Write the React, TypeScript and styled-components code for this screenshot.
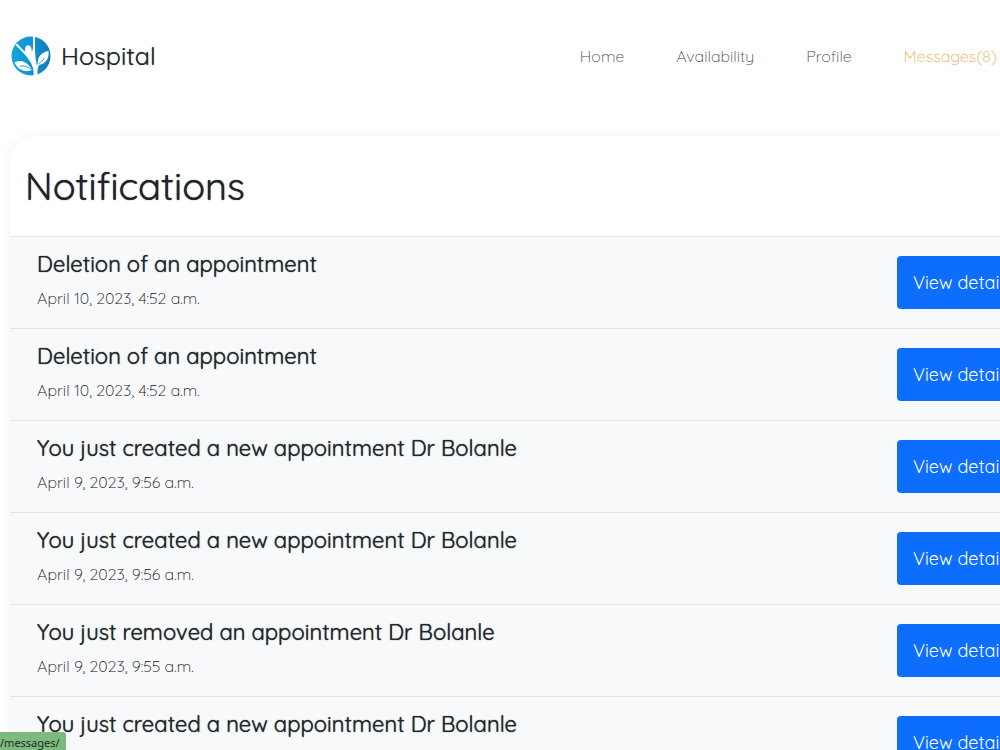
import React from "react";
import styled, { createGlobalStyle } from "styled-components";

const GlobalStyle = createGlobalStyle`
  *, *::before, *::after { box-sizing: border-box; }
  body {
    margin: 0;
    background: #ffffff;
    color: #212529;
    font-family: Quicksand, Lato, "Liberation Sans", sans-serif;
    font-size: 16px;
    line-height: 24px;
  }
`;

const Page = styled.div`
  height: 100vh;
  overflow: hidden;
`;

const Header = styled.header`
  display: flex;
  align-items: center;
  justify-content: space-between;
  padding: 32px 3px 32px 11px;
`;

const Brand = styled.a`
  display: flex;
  align-items: center;
  gap: 10px;
  color: #212529;
  font-size: 25px;
  font-weight: 400;
  line-height: 48px;
  text-decoration: none;
  text-shadow: 0 0 1px rgba(33, 37, 41, 0.6);
`;

const Nav = styled.nav`
  display: flex;
  gap: 52px;
`;

const NavLink = styled.a<{ $active?: boolean }>`
  color: ${(p) => (p.$active ? "#e8ad58" : "#44484d")};
  font-size: 16px;
  font-weight: 300;
  text-decoration: none;
`;

const Card = styled.main`
  margin: 24px -32px 0 10px;
  border-radius: 24px 24px 0 0;
  background: #ffffff;
  box-shadow: 0 0 12px rgba(0, 0, 0, 0.05);
`;

const CardTitle = styled.h1`
  margin: 0;
  padding: 26px 15px;
  font-size: 38px;
  font-weight: 400;
  line-height: 48px;
  text-shadow: 0 0 1px #212529;
`;

const List = styled.ul`
  margin: 0;
  padding: 0;
  list-style: none;
`;

const Item = styled.li`
  display: flex;
  align-items: flex-start;
  justify-content: space-between;
  height: 92px;
  padding: 13px 0 0 27px;
  border-top: 1px solid #e3e6e9;
  background: #f8f9fb;
`;

const ItemTitle = styled.h2`
  margin: 0 0 8px;
  font-size: 22px;
  font-weight: 400;
  line-height: 28px;
  text-shadow: 0 0 1px #212529;
`;

const ItemDate = styled.time`
  display: block;
  color: #0c0e10;
  font-size: 16px;
  font-weight: 300;
`;

const DetailsButton = styled.button`
  width: 135px;
  height: 53px;
  margin-top: 6px;
  padding: 0 16px;
  border: 0;
  border-radius: 4px;
  background: #0d6efd;
  color: #ffffff;
  font: inherit;
  font-size: 18px;
  text-align: left;
  white-space: nowrap;
`;

const StatusBar = styled.div`
  position: fixed;
  bottom: 0;
  left: 0;
  height: 18px;
  padding: 2px 6px 0 0;
  border-radius: 0 3px 0 0;
  background: #7dba80;
  color: #1c2b1e;
  font-family: "Noto Sans", "Open Sans", sans-serif;
  font-size: 11px;
  line-height: 18px;
`;

const Logo = () => (
  <svg width="40" height="40" viewBox="0 0 40 40" aria-hidden="true">
    <defs>
      <linearGradient id="disc" x1="0" x2="1">
        <stop offset="0" stopColor="#10a6e0" />
        <stop offset="0.55" stopColor="#1291cf" />
        <stop offset="1" stopColor="#1479b8" />
      </linearGradient>
    </defs>
    <circle cx="20" cy="20" r="19.5" fill="url(#disc)" />
    <g fill="#ffffff">
      <path d="M22 0 H24.2 C23.6 10 24.2 16 24.5 22 C25.5 28 27 34 26.4 40 H22.6 C23.2 31 20 26 15 20 C12 16.5 7.5 12 4.5 9 L6 7.6 C9 11 12 14 14.5 15.8 C13.6 12.5 14.5 9.3 17 9.2 C19.6 9.3 21 12 20.6 15.5 C21.6 15 22 13 22 10 Z" />
      <path d="M3.5 26.5 C8 23.4 16 24.5 21 34 C14 36.5 7 34.5 3.5 26.5Z" />
      <path d="M37.5 15 C38.5 22 35 28 27 29 C25.5 21 31 16 37.5 15Z" />
      <path d="M26 36 C26.5 31 28.5 28 31 25 L30 24 C27 26 25.5 29 25 33Z" />
    </g>
    <path d="M9 30.2 C13 29.4 17 30.6 20.5 33.6 M28 27.6 C30 26.6 32 24.4 33.2 22" fill="none" stroke="#1291cf" strokeWidth="0.9" />
  </svg>
);

const links = [
  { label: "Home", href: "/" },
  { label: "Availability", href: "/availability/" },
  { label: "Profile", href: "/profile/" },
  { label: "Messages(8)", href: "/messages/", active: true },
];

const notifications = [
  { title: "Deletion of an appointment", date: "April 10, 2023, 4:52 a.m." },
  { title: "Deletion of an appointment", date: "April 10, 2023, 4:52 a.m." },
  { title: "You just created a new appointment Dr Bolanle", date: "April 9, 2023, 9:56 a.m." },
  { title: "You just created a new appointment Dr Bolanle", date: "April 9, 2023, 9:56 a.m." },
  { title: "You just removed an appointment Dr Bolanle", date: "April 9, 2023, 9:55 a.m." },
  { title: "You just created a new appointment Dr Bolanle", date: "" },
];

export default function App() {
  return (
    <Page>
      <GlobalStyle />
      <Header>
        <Brand href="/">
          <Logo />
          Hospital
        </Brand>
        <Nav>
          {links.map((l) => (
            <NavLink key={l.label} href={l.href} $active={l.active}>
              {l.label}
            </NavLink>
          ))}
        </Nav>
      </Header>
      <Card>
        <CardTitle>Notifications</CardTitle>
        <List>
          {notifications.map((n, i) => (
            <Item key={i}>
              <div>
                <ItemTitle>{n.title}</ItemTitle>
                {n.date && <ItemDate>{n.date}</ItemDate>}
              </div>
              <DetailsButton type="button">View details</DetailsButton>
            </Item>
          ))}
        </List>
      </Card>
      <StatusBar>/messages/</StatusBar>
    </Page>
  );
}
